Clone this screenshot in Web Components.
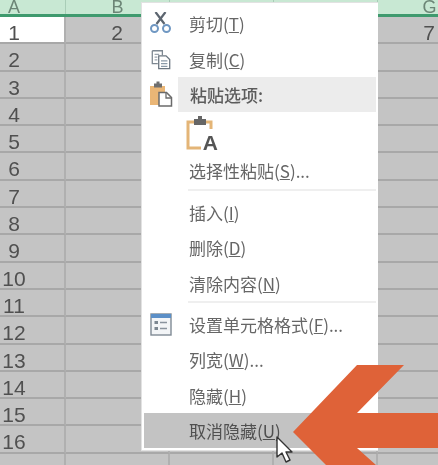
<!DOCTYPE html>
<html lang="zh">
<head>
<meta charset="utf-8">
<title>取消隐藏</title>
<style>
  html, body { margin: 0; padding: 0; height: 100%; overflow: hidden; background: #c4c4c4; }
  body {
    position: relative;
    width: 438px;
    height: 465px;
    font-family: "Noto Sans CJK SC", "Liberation Sans", sans-serif;
    filter: blur(0.55px);
  }
</style>
</head>
<body>
<sheet-grid></sheet-grid>

<context-menu>
  <menu-item icon="cut">剪切(<u>T</u>)</menu-item>
  <menu-item icon="copy">复制(<u>C</u>)</menu-item>
  <menu-item icon="paste" kind="heading">粘贴选项:</menu-item>
  <paste-option></paste-option>
  <menu-item>选择性粘贴(<u>S</u>)...</menu-item>
  <menu-sep></menu-sep>
  <menu-item>插入(<u>I</u>)</menu-item>
  <menu-item>删除(<u>D</u>)</menu-item>
  <menu-item>清除内容(<u>N</u>)</menu-item>
  <menu-sep></menu-sep>
  <menu-item icon="format">设置单元格格式(<u>F</u>)...</menu-item>
  <menu-item>列宽(<u>W</u>)...</menu-item>
  <menu-item>隐藏(<u>H</u>)</menu-item>
  <menu-item kind="hover">取消隐藏(<u>U</u>)</menu-item>
</context-menu>

<callout-arrow></callout-arrow>
<mouse-cursor></mouse-cursor>

<script>
const icons = {
  cut: `<svg width="24" height="24" viewBox="0 0 24 24" fill="none">
    <path d="M6.500 0l9 12M16.500 0L7.500 12" stroke="#5d6670" stroke-width="2.200"/>
    <circle cx="5.500" cy="16.500" r="3.500" stroke="#6f97c2" stroke-width="2"/>
    <circle cx="17.500" cy="16.500" r="3.500" stroke="#6f97c2" stroke-width="2"/>
  </svg>`,
  copy: `<svg width="22" height="22" viewBox="0 0 24 24" fill="none">
    <path d="M2.500 3h11v5M2.500 3v14h6" stroke="#7d8791" stroke-width="1.400"/>
    <path d="M5 7h5M5 10h3M5 13h3" stroke="#9aa3ad" stroke-width="1.200"/>
    <path d="M9.500 8.500h8l4 4v10h-12z" fill="#fff" stroke="#6b7680" stroke-width="1.400"/>
    <path d="M12 14h7M12 17h7M12 20h7" stroke="#8a9aa8" stroke-width="1.200"/>
  </svg>`,
  paste: `<svg width="24" height="26" viewBox="0 0 24 26" fill="none">
    <rect x="1" y="5" width="15" height="19" fill="#eab676"/>
    <rect x="5" y="2.500" width="8" height="4" fill="#6e6e6e"/>
    <rect x="7.500" y="0.500" width="3" height="3" fill="#6e6e6e"/>
    <path d="M10 11.500h7.500l5 5v8.500h-12.500z" fill="#fff" stroke="#6b6b6b" stroke-width="1.500"/>
    <path d="M17 11.500v5.500h5.500" stroke="#6b6b6b" stroke-width="1.300"/>
  </svg>`,
  format: `<svg width="22" height="23" viewBox="0 0 22 23" fill="none">
    <rect x="1" y="1" width="20" height="21" fill="#f3f5f7" stroke="#7f8a94" stroke-width="1.400"/>
    <rect x="1" y="1" width="20" height="4" fill="#5b8fc7"/>
    <rect x="4.500" y="8" width="3.500" height="3" fill="#7c8791"/>
    <rect x="4.500" y="14" width="3.500" height="3" fill="#7c8791"/>
    <path d="M10 9.500h7M10 15.500h7" stroke="#8a949e" stroke-width="1.400"/>
  </svg>`
}

class SheetGrid extends HTMLElement {
  constructor() {
    super()
    this.attachShadow({mode: 'open'})
    const cols = ['A', 'B', '', '', 'G']
    const values = {B: '2', G: '7'}
    const head = cols.map(c => `<div class="head">${c}</div>`).join('')
    const rows = []
    // row 17 only shows its top edge in the window, so it gets no number
    for (let i = 1; i <= 17; i++) {
      const cells = cols.map((c, n) => {
        const text = i === 1 ? (values[c] || '') : ''
        if (n === 0) {
          const label = i < 17 ? i : ''
          return `<div class="cell first ${i === 1 ? 'active' : ''}"><span>${label}</span></div>`
        }
        return `<div class="cell">${text}</div>`
      }).join('')
      rows.push(cells)
    }
    this.shadowRoot.innerHTML = `
      <style>
        :host {
          display: block;
          width: 438px;
          height: 465px;
          overflow: hidden;
          font-family: "Liberation Sans", sans-serif;
          color: #505050;
        }
        .grid {
          display: grid;
          grid-template-columns: 66px 104px 104px 104px 104px;
          grid-template-rows: 14px 3px;
          grid-auto-rows: 27.3px;
        }
        .head {
          background: #c8e8d3;
          border-right: 1px solid #a9cdb7;
          box-sizing: border-box;
          height: 14px;
          font-size: 18px;
          line-height: 14px;
          text-align: center;
          color: #6c8576;
        }
        .head:first-child { text-align: left; padding-left: 8px; }
        .line { grid-column: 1 / -1; background: #3f9a6e; height: 3px; }
        .cell {
          background: #c4c4c4;
          border-right: 2px solid #b0b0b0;
          border-bottom: 2px solid #a8a8a8;
          box-sizing: border-box;
          padding-top: 3px;
          font-size: 21px;
          line-height: 25px;
          text-align: center;
        }
        .cell.first { text-align: left; }
        .cell.first span { display: block; width: 28px; text-align: center; }
        .cell.active { background: #fff; }
      </style>
      <div class="grid">${head}<div class="line"></div>${rows.join('')}</div>`
  }
}

class ContextMenu extends HTMLElement {
  constructor() {
    super()
    this.attachShadow({mode: 'open'})
    this.shadowRoot.innerHTML = `
      <style>
        :host {
          display: flex;
          flex-direction: column;
          position: absolute;
          left: 141px;
          top: 2px;
          width: 237px;
          height: 449px;
          box-sizing: border-box;
          padding: 3px 0 2px 2px;
          background: #fff;
          border: 1px solid #e2e2e2;
          border-right: 0;
          color: #666;
        }
      </style>
      <slot></slot>`
  }
}

class MenuItem extends HTMLElement {
  constructor() {
    super()
    this.attachShadow({mode: 'open'})
    this.shadowRoot.innerHTML = `
      <style>
        :host {
          display: flex;
          align-items: center;
          flex: none;
          height: 35.4px;
          font-size: 17px;
        }
        .gutter {
          flex: none;
          width: 34px;
          height: 100%;
          display: flex;
          align-items: center;
          justify-content: center;
        }
        .gutter svg { display: block; }
        .label {
          flex: 1;
          height: 100%;
          display: flex;
          align-items: center;
          padding-left: 11px;
          white-space: pre;
        }
        :host([kind=heading]) .label {
          background: #ececec;
          margin-right: 2px;
          padding-left: 12px;
          font-weight: 500;
          color: #5c5c5c;
        }
        :host([kind=hover]) { background: #c3c3c3; color: #505050; }
      </style>
      <div class="gutter"></div>
      <div class="label"><slot></slot></div>`
  }

  connectedCallback() {
    const name = this.getAttribute('icon')
    if (name) this.shadowRoot.querySelector('.gutter').innerHTML = icons[name]
  }
}

class MenuSep extends HTMLElement {
  constructor() {
    super()
    this.attachShadow({mode: 'open'})
    this.shadowRoot.innerHTML = `
      <style>
        :host {
          display: block;
          flex: none;
          height: 2px;
          margin: 0 2px 4px 44px;
          background: #efefef;
        }
      </style>`
  }
}

class PasteOption extends HTMLElement {
  constructor() {
    super()
    this.attachShadow({mode: 'open'})
    this.shadowRoot.innerHTML = `
      <style>
        :host {
          display: flex;
          align-items: center;
          flex: none;
          height: 41px;
          padding-left: 42px;
        }
        .box { position: relative; width: 32px; height: 34px; }
        svg { display: block; }
        span {
          position: absolute;
          right: 0;
          bottom: -3px;
          font: bold 21px/1 "Liberation Sans", sans-serif;
          color: #555;
        }
      </style>
      <div class="box">
        <svg width="32" height="34" viewBox="0 0 32 34" fill="none">
          <path d="M15 6H2v26h13" stroke="#e4b577" stroke-width="3"/>
          <path d="M20 6h5v7" stroke="#e4b577" stroke-width="3"/>
          <rect x="8" y="3" width="12" height="6" fill="#666"/>
          <rect x="12" y="0" width="4" height="4" fill="#666"/>
        </svg>
        <span>A</span>
      </div>`
  }
}

class CalloutArrow extends HTMLElement {
  constructor() {
    super()
    this.attachShadow({mode: 'open'})
    this.shadowRoot.innerHTML = `
      <style>
        :host { display: block; position: absolute; left: 0; top: 0; }
        svg { display: block; }
      </style>
      <svg width="438" height="465" viewBox="0 0 438 465">
        <polygon fill="#df6238" points="293,432 357,365 404,365 357,413 438,413 438,448 357,448 376,465 326,465"/>
      </svg>`
  }
}

class MouseCursor extends HTMLElement {
  constructor() {
    super()
    this.attachShadow({mode: 'open'})
    this.shadowRoot.innerHTML = `
      <style>
        :host { display: block; position: absolute; left: 275px; top: 436px; }
        svg { display: block; }
      </style>
      <svg width="20" height="28" viewBox="0 0 20 28">
        <path d="M2 1v20l5-4 4 9 4-2-4-8h6z" fill="#fff" stroke="#333" stroke-width="1.400" stroke-linejoin="round"/>
      </svg>`
  }
}

customElements.define('sheet-grid', SheetGrid)
customElements.define('context-menu', ContextMenu)
customElements.define('menu-item', MenuItem)
customElements.define('menu-sep', MenuSep)
customElements.define('paste-option', PasteOption)
customElements.define('callout-arrow', CalloutArrow)
customElements.define('mouse-cursor', MouseCursor)
</script>
</body>
</html>
